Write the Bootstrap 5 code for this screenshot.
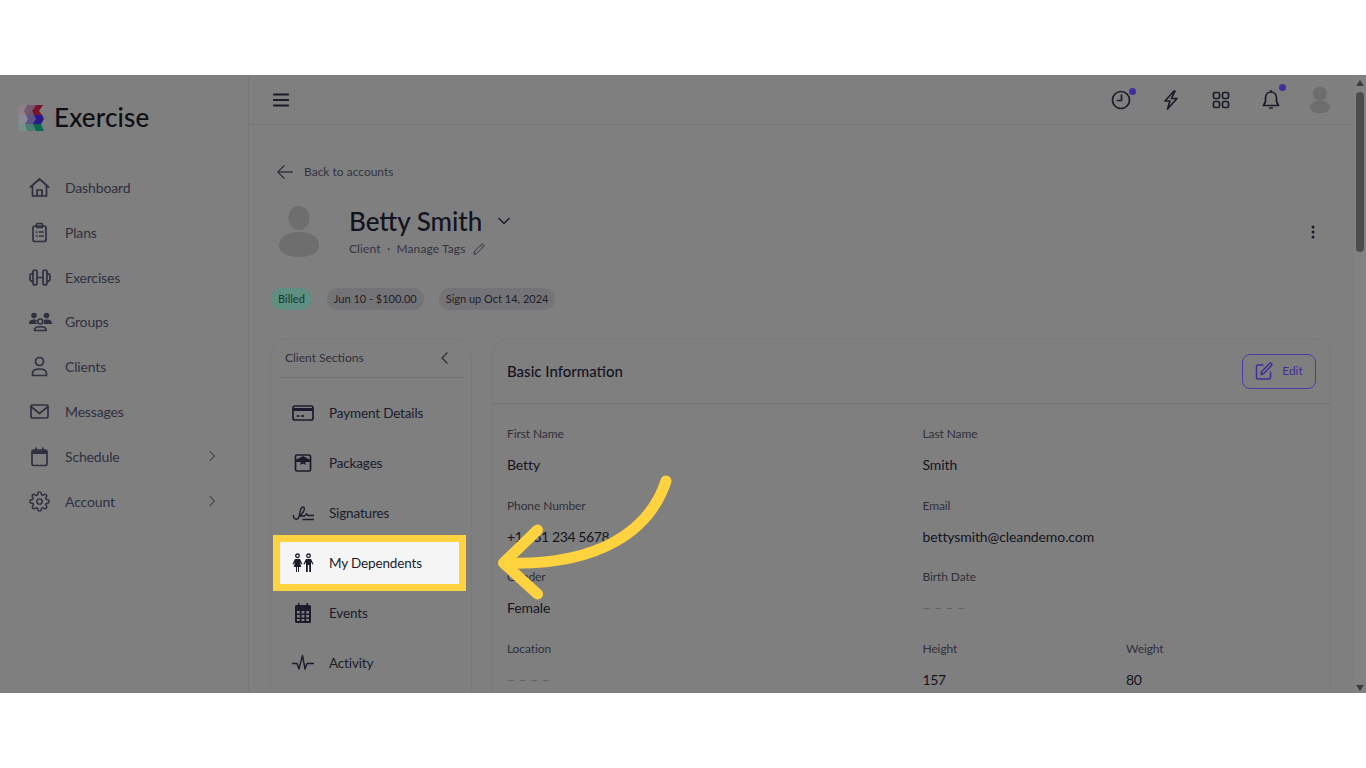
<!DOCTYPE html>
<html lang="en"><head><meta charset="utf-8"><title>Exercise</title>
<link href="https://cdn.jsdelivr.net/npm/bootstrap@5.3.0/dist/css/bootstrap.min.css" rel="stylesheet">
<style>
html,body{height:768px;overflow:hidden;background:#fff}
body{font-family:"Lato","Liberation Sans",sans-serif;color:#1b1c2b}
svg{display:block;flex:none}
.ic{fill:none;stroke:currentColor;stroke-width:1.7;stroke-linecap:round;stroke-linejoin:round}
.frame{margin-top:75px;height:618px;background:#7f7f7f;position:relative;overflow:hidden}
.side{width:249px;border-right:1px solid #777;flex:none}
.logo-row{height:85px;padding:29px 0 0 17px;gap:9px}
.logo-txt{font-size:26px;font-weight:500;color:#0e0e14;line-height:28px;letter-spacing:.15px;margin-top:-1px}
.side-nav{padding:5px 32px 0 29px;color:#2f3040}
.side-link{height:44.85px;font-size:14px;color:#2f3040;letter-spacing:-.15px}
.side-ico{width:36px}
.topbar{height:50px;flex:none;border-bottom:1px solid #777;padding-left:24px;padding-right:10px}
.top-ico{width:50px;position:relative;display:flex;justify-content:center}
.pdot{position:absolute;width:7px;height:7px;border-radius:50%;background:#3f2f9e}
.content{padding:39px 23px 0 21px}
.back{font-size:12px;color:#33343f;padding-left:7px;gap:11px;height:16px}
.who{margin-top:26px;height:54px;padding-left:9px}
.who-txt{margin-left:30px}
.who-name{font-size:26px;line-height:30px;font-weight:500;color:#12131f}
.who-sub{font-size:12px;color:#33343f;letter-spacing:.1px;margin-top:5px;line-height:16px}
.chips{margin-top:28px;margin-left:1px;gap:15px}
.chip{height:22px;border-radius:11px;background:#747476;font-size:11px;line-height:22px;padding:0 7px;color:#1d1e28}
.chip-ok{background:#5f8f80;color:#123a30}
.pane-row{margin-top:28px;gap:20px;align-items:flex-start}
.pane{background:#7f7f7f;border:1px solid #7a7a7a;border-radius:18px}
.pane-l{width:202px;flex:none;height:420px;padding:0 7px}
.pane-r{flex:1;min-width:0;height:420px}
.pane-l-head{height:39px;border-bottom:1px solid #747474;font-size:12px;color:#2e2f3b;padding:0 16px 0 7px}
.sec-list{padding-top:10px;margin:0 -4px 0}
.sec-row{height:50px;padding-left:18px;gap:15px;font-size:13.5px;color:#1b1c2b;letter-spacing:-.15px}
.sec-on{height:56px;margin:-3px 2px -3px -1px;border:7px solid #ffd23f;background:#f5f5f5;padding-left:12px;position:relative}
.pane-r-head{height:65px;border-bottom:1px solid #747474;padding:0 14px}
.pane-title{font-size:15px;font-weight:500;color:#12131f}
.edit-btn{width:74px;height:35px;border:1px solid #4a3fa8;border-radius:8px;color:#3c2f9a;font-size:12px;gap:9px;padding:0}
.edit-btn:hover{color:#3c2f9a;border-color:#4a3fa8}
.fields{padding:22px 14px 0;display:grid;grid-template-columns:415.5px minmax(0,1fr)}
.fld{height:71.7px}
.fld-l{font-size:12px;color:#2f303c;line-height:16px;letter-spacing:-.1px}
.fld-v{font-size:14px;color:#14151f;line-height:20px;margin-top:13px;letter-spacing:-.1px}
.fld-num{letter-spacing:-.4px}
.fld-e{color:#5d5d66}
.sub-col{width:203.5px;flex:none}
.sbar{width:12px;flex:none;background:#818181;position:relative}
.sthumb{position:absolute;left:2px;top:17px;width:8px;height:160px;border-radius:4px;background:#4d4d4d}
.sarr-t,.sarr-b{position:absolute;left:2px;width:0;height:0;border-left:4px solid transparent;border-right:4px solid transparent}
.sarr-t{top:5px;border-bottom:6px solid #3c3c3c}
.sarr-b{bottom:2px;border-top:6px solid #3c3c3c}
.arrow{position:absolute;left:0;top:-75px;pointer-events:none}
</style></head>
<body>
<div class="frame d-flex">
  <aside class="side">
    <div class="logo-row d-flex align-items-start">
      <svg width="28" height="28" viewBox="0 0 28 28">
        <g><path d="M2 1h10l1 6-1 4H1L0 7z" fill="#8e8088"/><path d="M1 11h11l2 4-2 5H1l1-5z" fill="#8a8a98"/><path d="M1 20h11l2 7H2z" fill="#76908a"/></g>
        <g><path d="M10 1h9l-4 6 3 4H9L7 7z" fill="#75596f"/><path d="M9 11h9l2 4-3 5H8l3-5z" fill="#5d5488"/><path d="M8 20h9l3 7H10z" fill="#4b7f75"/></g>
        <g><path d="M19 1h7l-4 6 3 4h-8l-2-4z" fill="#7a1428"/><path d="M17 11h8l2 4-3 5h-8l3-5z" fill="#2a188c"/><path d="M16 20h8l3 7h-8z" fill="#0d6a50"/></g>
      </svg>
      <span class="logo-txt">Exercise</span>
    </div>
    <nav class="side-nav">
      <a class="side-link d-flex align-items-center text-decoration-none"><span class="side-ico"><svg class="ic" width="21" height="21" viewBox="0 0 21 21"><path d="M1.5 10 10.500 2l9 8M3.500 8.500V19h14V8.500M8 19v-6h5v6"/></svg></span>Dashboard</a>
      <a class="side-link d-flex align-items-center text-decoration-none"><span class="side-ico"><svg class="ic" width="21" height="21" viewBox="0 0 21 21"><rect x="4" y="4" width="13" height="15.500" rx="2"/><rect x="7.500" y="1.500" width="6" height="4" rx="1"/><path d="M7.500 10h.5M10.500 10h3.500M7.500 14h.5M10.500 14h3.500"/></svg></span>Plans</a>
      <a class="side-link d-flex align-items-center text-decoration-none"><span class="side-ico"><svg class="ic" width="22" height="21" viewBox="0 0 22 21"><rect x="4" y="3" width="4" height="15" rx="2"/><rect x="14" y="3" width="4" height="15" rx="2"/><path d="M8 10.500h6M4 6.500C2 6.500 1 7.500 1 9v3c0 1.500 1 2.500 3 2.500M18 6.500c2 0 3 1 3 2.500v3c0 1.500-1 2.500-3 2.500"/></svg></span>Exercises</a>
      <a class="side-link d-flex align-items-center text-decoration-none"><span class="side-ico"><svg width="23" height="20" viewBox="0 0 23 20"><g fill="currentColor"><circle cx="5" cy="3.500" r="2.800"/><circle cx="17.500" cy="3.500" r="2.800"/><path d="M0 11.500c0-3 2-4 5-4 1.500 0 2.500.3 3 .8-1 1-1 2.700 0 3.700H.5zM23 11.500c0-3-2-4-5.500-4-1.500 0-2.500.3-3 .8 1 1 1 2.700 0 3.700h8z"/></g><g fill="none" stroke="currentColor" stroke-width="1.600"><circle cx="11.300" cy="9.500" r="2.500"/><path d="M5.500 18.500v-.5c0-2 2-3.200 5.800-3.200s5.800 1.200 5.800 3.200v.5z"/></g></svg></span>Groups</a>
      <a class="side-link d-flex align-items-center text-decoration-none"><span class="side-ico"><svg class="ic" width="21" height="21" viewBox="0 0 21 21"><circle cx="10.500" cy="5.500" r="4"/><path d="M3.500 19.500v-2c0-3 3-4.500 7-4.500s7 1.500 7 4.500v2z"/></svg></span>Clients</a>
      <a class="side-link d-flex align-items-center text-decoration-none"><span class="side-ico"><svg class="ic" width="21" height="21" viewBox="0 0 21 21"><rect x="2" y="4" width="17" height="13" rx="1.500"/><path d="m2 5.500 8.500 7 8.500-7"/></svg></span>Messages</a>
      <a class="side-link d-flex align-items-center text-decoration-none"><span class="side-ico"><svg width="21" height="21" viewBox="0 0 21 21"><rect x="3" y="4" width="15" height="15.500" rx="2" fill="none" stroke="currentColor" stroke-width="1.700"/><path d="M3 4.500h15V8H3z" fill="currentColor"/><path d="M7 2v3M14 2v3" stroke="currentColor" stroke-width="1.700" stroke-linecap="round"/></svg></span>Schedule<svg class="ic ms-auto" width="8" height="12" viewBox="0 0 8 12" style="stroke-width:1.200;color:#4a4b55"><path d="m2 1.500 4.500 4.500L2 10.500"/></svg></a>
      <a class="side-link d-flex align-items-center text-decoration-none"><span class="side-ico"><svg class="ic" width="21" height="21" viewBox="0 0 24 24"><circle cx="12" cy="12" r="3"/><path d="M19.400 15a1.650 1.650 0 0 0 .33 1.820l.06.06a2 2 0 1 1-2.830 2.830l-.06-.06a1.650 1.650 0 0 0-2.800 1.170V21a2 2 0 0 1-4 0v-.09A1.650 1.650 0 0 0 7.300 19.740l-.06.06a2 2 0 1 1-2.830-2.830l.06-.06A1.650 1.650 0 0 0 3.300 14H3a2 2 0 0 1 0-4h.09A1.650 1.650 0 0 0 4.260 7.300l-.06-.06a2 2 0 1 1 2.830-2.830l.06.06A1.650 1.650 0 0 0 10 3.300V3a2 2 0 0 1 4 0v.09a1.650 1.650 0 0 0 2.800 1.170l.06-.06a2 2 0 1 1 2.830 2.830l-.06.06A1.650 1.650 0 0 0 20.700 10H21a2 2 0 0 1 0 4h-.09a1.650 1.650 0 0 0-1.510 1z"/></svg></span>Account<svg class="ic ms-auto" width="8" height="12" viewBox="0 0 8 12" style="stroke-width:1.200;color:#4a4b55"><path d="m2 1.500 4.500 4.500L2 10.500"/></svg></a>
    </nav>
  </aside>
  <div class="flex-grow-1 d-flex flex-column overflow-hidden">
    <header class="topbar d-flex align-items-center">
      <svg class="ic" width="16" height="14" viewBox="0 0 16 14" style="stroke-width:1.800"><path d="M.5 1.500h15M.5 7h15M.5 12.500h15"/></svg>
      <div class="ms-auto d-flex align-items-center">
        <span class="top-ico"><svg class="ic" width="20" height="20" viewBox="0 0 20 20"><circle cx="10" cy="10" r="8.500"/><path d="M10.500 5v5.500H6.500"/></svg><span class="pdot" style="left:33px;top:-2px"></span></span>
        <span class="top-ico"><svg class="ic" width="18" height="20" viewBox="0 0 18 20"><path d="M12 1 3 11h5l-2.500 8L15 8.500h-5.500L13 1z"/></svg></span>
        <span class="top-ico"><svg class="ic" width="18" height="18" viewBox="0 0 18 18"><rect x="1.500" y="1.500" width="6" height="6" rx="1.500"/><rect x="10.500" y="1.500" width="6" height="6" rx="1.500"/><rect x="1.500" y="10.500" width="6" height="6" rx="1.500"/><rect x="10.500" y="10.500" width="6" height="6" rx="1.500"/></svg></span>
        <span class="top-ico"><svg class="ic" width="18" height="20" viewBox="0 0 18 20"><path d="M9 2c-3.500 0-5.500 2.500-5.500 6v3.500L1.500 15.500h15l-2-4V8C14.500 4.500 12.500 2 9 2zM9 .8V2M7.800 18h2.400"/></svg><span class="pdot" style="left:33px;top:-6px"></span></span>
        <span class="top-ico" style="width:48px"><svg width="20" height="27" viewBox="0 0 20 27" fill="#6d6d6d"><circle cx="10" cy="7.500" r="7"/><ellipse cx="10" cy="21" rx="10" ry="6.500"/></svg></span>
      </div>
    </header>
    <main class="content flex-grow-1 overflow-hidden">
      <div class="back d-flex align-items-center"><svg class="ic" width="16" height="14" viewBox="0 0 16 14" style="stroke-width:1.300"><path d="M15.500 7H.8M7 .8.800 7 7 13.200"/></svg>Back to accounts</div>
      <div class="who d-flex">
        <svg width="40" height="51" viewBox="0 0 40 51" fill="#6e6e6e"><ellipse cx="20" cy="12" rx="10.500" ry="12"/><path d="M0 39c0-8 8-13 20-13s20 5 20 13c0 8-8 12-20 12S0 47 0 39z"/></svg>
        <div class="who-txt">
          <div class="d-flex align-items-center"><span class="who-name">Betty Smith</span><svg class="ic ms-3" width="12" height="8" viewBox="0 0 12 8" style="stroke-width:1.400"><path d="m1 1.500 5 5 5-5"/></svg></div>
          <div class="who-sub d-flex align-items-center">Client&nbsp; ·&nbsp; Manage Tags<svg class="ic ms-2" width="12" height="12" viewBox="0 0 12 12" style="stroke-width:1"><path d="M1 11l.8-3L8.500 1.300a1 1 0 0 1 1.500 0l.7.700a1 1 0 0 1 0 1.500L4 10.200zM7.500 2.500l2 2"/></svg></div>
        </div>
        <svg class="ms-auto" width="4" height="14" viewBox="0 0 4 14" style="margin-top:19px;margin-right:16px" fill="currentColor"><circle cx="2" cy="2" r="1.500"/><circle cx="2" cy="7" r="1.500"/><circle cx="2" cy="12" r="1.500"/></svg>
      </div>
      <div class="chips d-flex"><span class="chip chip-ok">Billed</span><span class="chip">Jun 10 - $100.00</span><span class="chip">Sign up Oct 14, 2024</span></div>
      <div class="pane-row d-flex">
        <section class="pane pane-l">
          <div class="pane-l-head d-flex align-items-center justify-content-between">Client Sections<svg class="ic" width="7" height="12" viewBox="0 0 7 12" style="stroke-width:1.400"><path d="M6 1 1 6l5 5"/></svg></div>
          <div class="sec-list d-flex flex-column">
            <div class="sec-row d-flex align-items-center"><svg width="22" height="16" viewBox="0 0 22 16"><rect x="1" y="1" width="20" height="14" rx="2" fill="none" stroke="currentColor" stroke-width="1.700"/><path d="M1 3h20v3H1z" fill="currentColor"/><path d="M4.500 11h3M9 11h3" stroke="currentColor" stroke-width="1.300"/></svg>Payment Details</div>
            <div class="sec-row d-flex align-items-center"><svg width="22" height="18" viewBox="0 0 22 18"><path d="M3.500 2.500a1.500 1.500 0 0 1 1.500-1.500h12a1.500 1.500 0 0 1 1.500 1.500v13a1.500 1.500 0 0 1-1.500 1.500H5a1.500 1.500 0 0 1-1.500-1.500z" fill="none" stroke="currentColor" stroke-width="1.700"/><path d="M3.500 6 11 2l7.500 4v2H13.500v3l-2.500-1.500L8.500 11V8h-5z" fill="currentColor"/></svg>Packages</div>
            <div class="sec-row d-flex align-items-center"><svg class="ic" width="22" height="18" viewBox="0 0 22 18" style="stroke-width:1.400"><path d="M1.500 11.500c-.5 3 3 5 5 2.500 2-3 1-10.500 4-11 2.500-.5 2.500 3.500-.5 6.500l-2 2.500h4.500c1 0 1-2 2-2s.5 1.500 1.500 1.500h6M11 15.500h10.500"/></svg>Signatures</div>
            <div class="sec-row sec-on d-flex align-items-center"><svg width="22" height="20" viewBox="0 0 22 20"><g fill="none" stroke="currentColor" stroke-width="1.300"><circle cx="5.500" cy="2.800" r="1.800"/><circle cx="16.500" cy="2.800" r="1.800"/></g><g fill="currentColor"><path d="M3 6h5l2.500 5-1 .6L8 9l1.200 5H7v5H6v-5H5v5H4v-5H1.800L3 9l-1.500 2.600-1-.6z"/><path d="M14 6h5l2.500 5-1 .6L19 9v10h-1.800v-7h-1.400v7H14V9l-1.500 2.600-1-.6z"/></g></svg>My Dependents</div>
            <div class="sec-row d-flex align-items-center"><svg width="22" height="20" viewBox="0 0 22 20"><path fill-rule="evenodd" fill="currentColor" d="M6 0h1.500v2h7V0H16v2h1.500A1.500 1.500 0 0 1 19 3.500v15a1.500 1.500 0 0 1-1.500 1.500h-13A1.500 1.500 0 0 1 3 18.500v-15A1.500 1.500 0 0 1 4.500 2H6zM5 8v2.500h2.800V8zm4.600 0v2.500h2.800V8zm4.600 0v2.500H17V8zM5 12v2.500h2.800V12zm4.600 0v2.500h2.800V12zm4.600 0v2.500H17V12zM5 16v2h2.800v-2zm4.600 0v2h2.800v-2zm4.600 0v2H17v-2z"/></svg>Events</div>
            <div class="sec-row d-flex align-items-center"><svg class="ic" width="22" height="18" viewBox="0 0 22 18" style="stroke-width:1.400"><path d="M.5 9.500H5L7 15l3.500-13.500L13 15l2-5.500h6.500"/></svg>Activity</div>
          </div>
        </section>
        <section class="pane pane-r">
          <div class="pane-r-head d-flex align-items-center justify-content-between"><span class="pane-title">Basic Information</span><a class="btn edit-btn d-flex align-items-center justify-content-center"><svg class="ic" width="18" height="18" viewBox="0 0 18 18" style="stroke-width:1.500"><path d="M8 3H3a1.500 1.500 0 0 0-1.500 1.500v11A1.500 1.500 0 0 0 3 17h11a1.500 1.500 0 0 0 1.500-1.500V10M6 12.500l.7-3L14.500 1.500a1.400 1.400 0 0 1 2 2L8.800 11.500z"/></svg>Edit</a></div>
          <div class="fields">
            <div class="fld"><div class="fld-l">First Name</div><div class="fld-v">Betty</div></div>
            <div class="fld"><div class="fld-l">Last Name</div><div class="fld-v">Smith</div></div>
            <div class="fld"><div class="fld-l">Phone Number</div><div class="fld-v fld-num">+1 561 234 5678</div></div>
            <div class="fld"><div class="fld-l">Email</div><div class="fld-v">bettysmith@cleandemo.com</div></div>
            <div class="fld"><div class="fld-l">Gender</div><div class="fld-v">Female</div></div>
            <div class="fld"><div class="fld-l">Birth Date</div><div class="fld-v fld-e">– – – –</div></div>
            <div class="fld"><div class="fld-l">Location</div><div class="fld-v fld-e">– – – –</div></div>
            <div class="fld d-flex"><div class="sub-col"><div class="fld-l">Height</div><div class="fld-v fld-num">157</div></div><div class="sub-col"><div class="fld-l">Weight</div><div class="fld-v fld-num">80</div></div></div>
          </div>
        </section>
      </div>
    </main>
  </div>
  <div class="sbar"><span class="sarr-t"></span><span class="sthumb"></span><span class="sarr-b"></span></div>
  <svg class="arrow" width="1366" height="768" viewBox="0 0 1366 768" fill="none" stroke="#ffd23f" stroke-width="11" stroke-linecap="round" stroke-linejoin="round"><path d="M666 481C650 530 600 566 506 563"/><path d="M537.500 530 503.500 563 537.500 594"/></svg>
</div>
<script src="https://cdn.jsdelivr.net/npm/bootstrap@5.3.0/dist/js/bootstrap.bundle.min.js"></script>
</body></html>
